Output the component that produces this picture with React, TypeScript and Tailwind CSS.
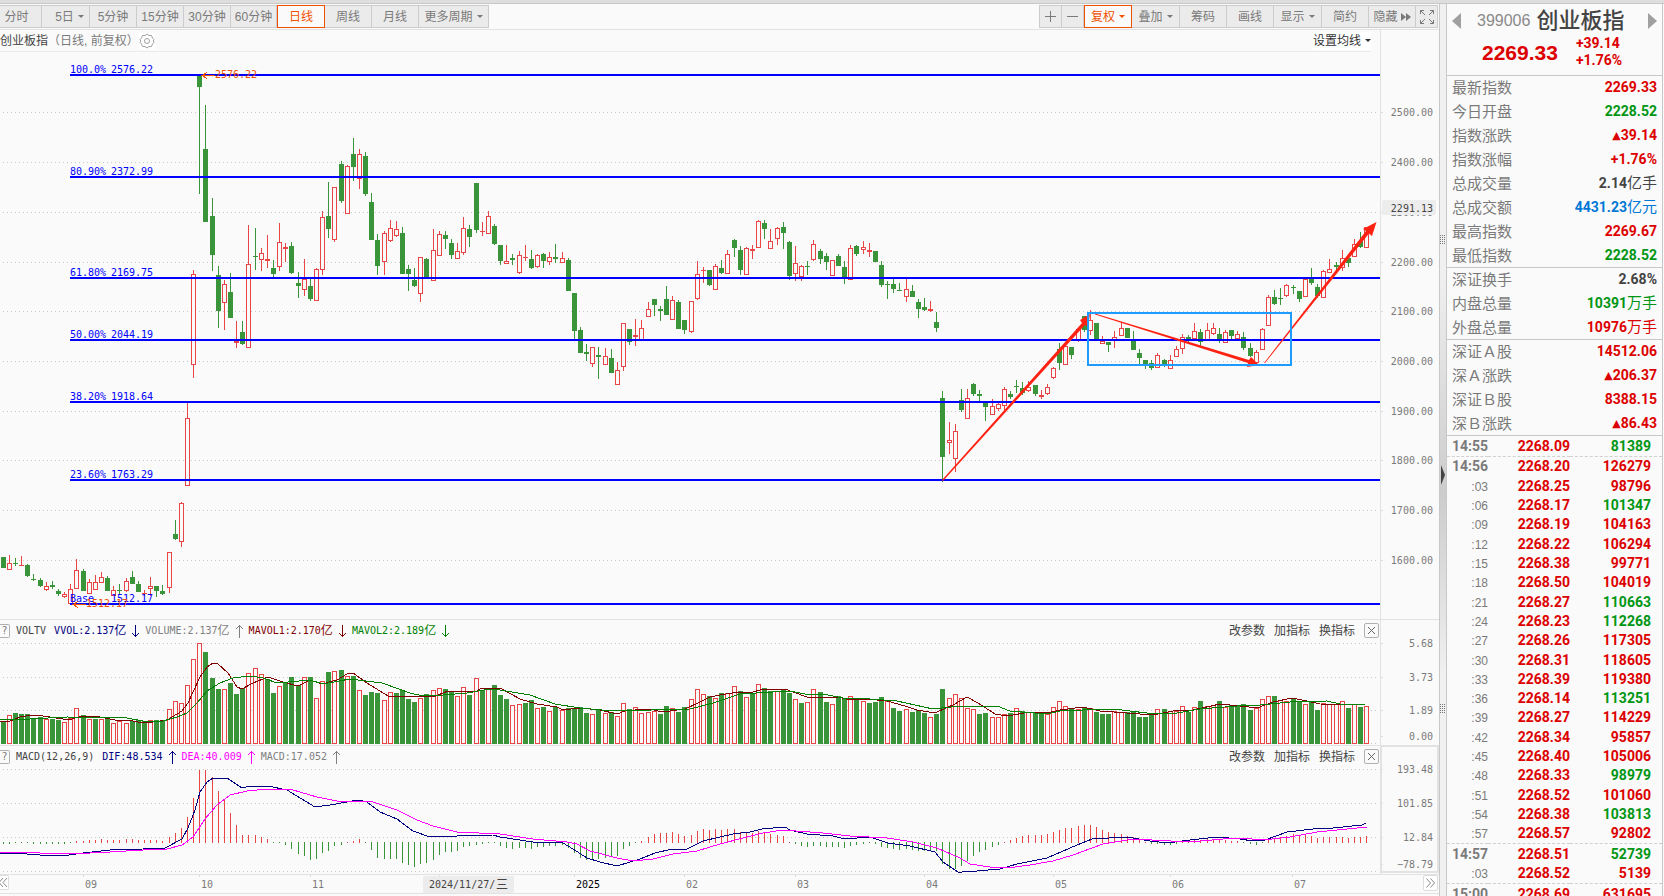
import type { ReactNode } from "react";

const RED = "#e84646";
const GREEN = "#3a943a";
const MONO = '"DejaVu Sans Mono", "Liberation Mono", monospace';

// direction, high, body top, body bottom, low
const CANDLES = `
g 557 557 568 568,r 555 563 570 570,g 558 563 564 566,r 556 565 566 566,g 564 565 576 577,g 574 579 580 581,g 578 580 586 587
r 582 586 590 591,g 581 585 587 589,g 589 591 594 596,r 592 594 597 598,r 584 589 604 604,r 559 570 589 589,g 569 571 591 591
r 579 582 594 594,r 575 582 590 590,r 572 577 583 583,g 576 578 591 591,r 586 590 596 596,g 584 590 591 594,r 578 581 591 592
g 571 577 584 584,g 581 584 592 592,r 590 593 594 596,r 577 586 589 596,g 586 586 591 597,g 585 591 594 595,r 552 552 588 593
g 520 534 539 540,r 502 503 542 547,r 403 418 486 486,r 270 274 365 378,g 75 75 87 194,g 105 149 222 222,g 198 216 255 271
g 266 275 311 328,r 280 284 303 330,g 273 292 318 318,r 321 341 343 348,g 321 332 344 345,r 225 264 348 348,g 228 256 257 270
r 248 253 260 271,r 235 259 261 268,g 260 268 274 277,r 223 242 267 271,r 243 247 249 262,g 242 246 273 274,g 272 283 286 298
r 259 279 290 296,g 279 286 299 301,r 268 269 301 301,r 211 217 270 275,g 182 216 229 238,r 187 187 240 242,g 161 164 201 203
r 165 166 214 214,g 138 154 167 181,r 149 154 179 189,g 152 156 194 196,g 193 202 240 240,g 234 240 266 275,r 231 233 262 275
r 220 228 241 242,r 221 229 236 237,g 227 233 274 274,g 265 269 274 291,g 268 280 286 287,r 257 257 294 302,g 258 259 277 277
r 229 250 281 281,r 231 234 256 256,g 231 235 239 249,g 239 243 255 259,r 243 251 259 259,r 217 228 253 255,g 225 229 237 247
g 183 183 230 233,r 222 231 232 236,r 211 216 234 234,g 224 226 244 245,g 245 245 261 265,r 245 261 264 264,g 254 258 260 265
r 251 255 273 274,r 245 257 258 261,g 250 259 268 269,r 254 255 267 268,g 253 254 261 268,r 252 257 262 265,g 244 257 259 263
r 252 258 263 263,g 258 260 291 291,g 293 293 331 340,g 327 330 353 353,g 344 352 354 361,r 347 347 364 367,g 347 355 357 379
r 348 356 365 365,g 349 358 373 373,r 362 370 385 385,r 323 323 367 371,g 329 329 342 345,r 319 335 337 346,r 320 328 340 340
r 302 309 317 317,g 299 299 305 316,g 306 309 311 321,g 286 299 315 315,r 296 300 320 320,g 300 302 329 329,g 320 320 330 334
r 301 301 332 333,r 261 274 299 300,r 267 270 271 283,g 270 270 285 286,r 264 266 290 290,g 260 268 273 274,r 250 254 274 274
g 239 240 248 257,g 246 250 270 275,r 247 248 275 275,r 245 249 251 259,r 220 221 248 248,g 220 223 229 239,r 229 241 249 249
r 227 228 239 245,g 222 227 233 249,g 241 242 276 280,r 246 263 274 281,r 265 266 277 281,g 261 266 267 275,r 240 244 260 261
g 249 251 259 264,g 253 256 262 270,r 260 260 276 276,g 254 256 266 266,g 261 267 278 284,r 245 248 280 280,g 245 246 254 256
r 241 247 250 254,r 243 250 252 257,g 251 251 262 262,g 261 265 285 287,g 281 284 285 299,g 278 284 289 293,g 283 290 291 291
r 278 289 297 302,g 285 291 297 297,g 299 302 309 318,g 298 307 310 311,r 301 309 311 312,g 312 322 328 332,g 391 398 457 482
r 422 440 443 454,r 424 431 459 472,g 389 400 410 412,r 389 398 419 419,g 383 384 394 396,g 390 394 396 402,g 402 403 407 421
r 399 406 415 415,r 401 404 409 411,r 387 389 406 410,g 391 394 397 399,g 380 386 387 393,g 382 388 393 395,r 381 387 391 392
g 385 385 394 396,r 390 395 397 399,r 384 387 394 395,r 367 368 378 379,g 343 349 363 370,r 344 346 365 365,g 347 347 355 359
r 328 329 340 342,g 316 316 330 332,r 310 320 331 335,g 323 323 339 339,r 336 341 344 344,g 342 342 345 352,r 331 337 340 348
r 322 328 336 336,g 328 328 338 338,g 331 339 350 350,g 349 353 358 365,g 360 360 364 369,g 360 363 368 370,r 353 355 368 368
g 359 360 365 367,r 355 360 369 369,r 346 349 357 357,r 334 337 349 354,g 335 337 340 343,r 323 331 339 339,g 329 332 342 346
r 323 330 340 340,r 323 328 334 335,g 328 334 340 343,r 330 332 343 343,g 330 330 336 340,r 331 334 339 339,g 332 337 348 350
g 343 348 356 357,r 350 352 363 363,r 328 329 350 350,r 295 297 326 326,g 290 297 304 305,g 288 298 299 305,r 284 285 296 297
g 285 287 288 294,g 291 291 299 302,r 278 279 297 297,g 268 278 283 285,g 284 287 296 298,r 270 271 298 298,r 259 269 273 273
g 262 265 267 272,r 250 258 268 271,g 256 258 263 267,r 239 244 257 257,g 232 241 247 248,r 227 227 248 248
`
  .trim()
  .split(/[,\n]/)
  .map((row) => {
    const [dir, ...rest] = row.split(" ");
    const [high, top, bottom, low] = rest.map(Number);
    return { up: dir === "r", high, top, bottom, low };
  });

const VOLUMES = `
g722 r715 g713 g714 g714 g718 g717 r719 g719 g720 r722 r718 r708 g715 r719 g719 r719 g718 r723 r721
r723 g721 g720 g721 r720 g720 g721 r709 r701 r703 r685 r659 r643 g652 g678 g689 r689 g683 g694 g688
r673 r668 r674 g679 g693 r686 g682 g677 g685 r677 g677 r698 r681 g672 r671 g670 r676 g676 r690 g695
g692 g693 r700 r692 g693 g690 g699 g702 r698 g694 r690 r688 g689 g692 r696 r687 g695 r678 g690 r689
g685 g695 g699 r705 r704 g703 g700 r708 g707 r711 g707 r710 g708 g709 g707 g713 r714 g709 r713 g712
r716 r703 g709 r707 r713 r712 r711 g714 g706 r708 g712 g707 r699 r689 r694 g696 r698 g693 r693 r686
g691 r697 g693 r684 g688 g691 r691 g690 g693 r699 g703 r702 r689 g692 g702 r704 g696 g699 r696 g699
r701 g703 g702 g697 r701 g708 g711 r709 g712 g710 g713 r717 g714 g689 r698 r694 r698 r708 r709 g714
g713 r717 r717 r714 g713 r708 g711 r712 g713 g714 r714 r707 r701 r706 g708 r709 g708 r708 g712 g714
g714 r711 r712 g712 g711 g717 g717 g715 r709 g709 r711 r711 r706 g712 r707 g701 r706 r705 g701 r707
g705 g706 g704 g710 r708 r699 r696 g696 r700 r701 g699 g702 r704 g702 g710 r703 r704 r704 r701 g708
r704 g707 r706
`
  .trim()
  .split(/\s+/)
  .map((v) => ({ up: v[0] === "r", top: Number(v.slice(1)) }));

const MACD = `
-2 -2 -1 0 -1 -2 -2 -2 -2 -2 -2 -1 2 2 3 3 4 3 3 3 4 4 3 3 3 3 2 6 10 15 26 45 73 73 66 52 43 30 18 8 8 8 6 4 0
-1 -3 -7 -12 -14 -18 -17 -11 -9 -4 -3 1 2 4 0 -8 -16 -17 -17 -17 -21 -23 -25 -22 -21 -18 -13 -10 -10 -9 -5 -4 -3
-2 0 -1 -4 -6 -7 -6 -6 -7 -5 -5 -4 -4 -3 -6 -11 -16 -18 -17 -17 -16 -15 -14 -7 -4 -1 2 6 9 10 10 11 9 7 8 12 14
13 14 13 14 14 11 10 10 12 11 9 8 7 1 -2 -4 -5 -4 -4 -5 -5 -5 -6 -4 -3 -2 -1 -2 -5 -6 -7 -8 -7 -8 -9 -9 -9 -9 -22
-27 -27 -24 -19 -14 -10 -8 -5 -3 1 3 5 7 8 8 8 9 11 13 15 15 17 18 18 16 13 11 10 9 7 6 4 1 -2 -2 -3 -3 -2 2 2 3 3
4 4 4 3 2 2 0 -2 -3 -1 3 4 6 7 9 7 8 7 5 6 6 6 6 5 6 6 7
`
  .trim()
  .split(/\s+/)
  .map(Number);

const MAVOL1 =
  "0,721 10,721 20,717 32,715 43,716 63,719 72,719 82,716 100,717 115,720 133,721 143,723 153,722 167,720 182,711 188,703 193,692 200,677 207,667 213,663 218,664 228,673 237,687 242,689 253,683 268,677 283,682 298,686 310,680 322,684 337,680 347,674 353,673 367,683 388,696 417,696 433,697 448,691 475,692 480,689 500,688 520,699 537,704 557,707 563,710 580,708 600,710 617,714 625,711 635,710 650,709 662,712 685,709 700,702 710,697 720,695 738,692 753,692 760,690 785,689 793,692 807,697 830,698 838,697 850,700 867,699 887,701 905,706 917,710 935,713 948,707 953,705 967,697 978,703 995,714 1007,716 1030,712 1047,713 1060,710 1083,707 1100,711 1127,713 1153,715 1173,711 1193,710 1220,704 1240,706 1257,708 1273,702 1292,698 1307,701 1320,704 1365,705";
const MAVOL2 =
  "0,719 30,719 67,717 127,718 143,721 163,721 177,717 187,713 197,703 207,691 220,683 233,678 250,676 263,678 277,683 310,680 323,684 350,679 382,683 410,693 423,696 443,695 467,693 490,689 500,690 530,695 555,704 580,708 613,711 690,709 713,703 740,694 790,691 810,695 823,694 843,698 870,699 897,701 933,709 960,706 997,706 1010,711 1047,714 1060,711 1083,710 1113,709 1147,713 1177,713 1200,709 1237,706 1260,705 1290,702 1327,701 1340,704 1365,705";
const DIF =
  "0,853 27,854 40,855 62,856 83,853 110,850 143,849 165,848 182,839 188,828 195,810 200,792 207,782 213,778 227,778 242,788 250,786 268,786 287,790 315,807 330,805 358,800 367,802 380,812 397,819 413,831 427,836 457,836 493,835 500,837 533,842 563,843 573,849 587,858 600,862 617,866 640,859 655,853 672,849 687,849 703,841 733,834 750,832 762,829 785,827 790,830 807,834 833,836 845,839 870,837 888,843 910,846 935,852 943,862 958,872 962,872 977,871 1000,869 1017,864 1047,858 1077,845 1092,839 1127,837 1150,841 1167,843 1190,840 1217,837 1240,839 1253,841 1265,840 1287,832 1313,829 1333,828 1362,825 1366,823";
const DEA =
  "0,852 40,853 70,854 110,852 143,850 167,849 182,845 193,837 205,819 217,805 230,795 247,791 267,789 293,790 317,797 337,801 370,801 397,810 417,820 433,826 457,832 500,834 533,839 567,842 577,844 590,851 617,858 633,861 653,859 673,854 697,851 720,844 743,838 763,833 783,830 823,833 850,836 887,838 913,842 937,848 960,858 970,864 990,867 1007,868 1030,865 1053,861 1073,855 1103,844 1133,839 1190,842 1223,839 1240,838 1263,840 1290,837 1317,832 1367,827";

const FIBS = [
  { y: 75, pct: "100.0%", price: "2576.22" },
  { y: 177, pct: "80.90%", price: "2372.99" },
  { y: 278, pct: "61.80%", price: "2169.75" },
  { y: 340, pct: "50.00%", price: "2044.19" },
  { y: 402, pct: "38.20%", price: "1918.64" },
  { y: 480, pct: "23.60%", price: "1763.29" },
  { y: 604, pct: "Base", price: "1512.17" },
];

const PRICE_TICKS: [number, string][] = [
  [112, "2500.00"],
  [162, "2400.00"],
  [212, "2300.00"],
  [262, "2200.00"],
  [311, "2100.00"],
  [361, "2000.00"],
  [411, "1900.00"],
  [460, "1800.00"],
  [510, "1700.00"],
  [560, "1600.00"],
];

const MONTHS = [
  { x: 83, label: "09" },
  { x: 199, label: "10" },
  { x: 310, label: "11" },
  { x: 439, label: "" },
  { x: 574, label: "2025" },
  { x: 684, label: "02" },
  { x: 795, label: "03" },
  { x: 924, label: "04" },
  { x: 1053, label: "05" },
  { x: 1170, label: "06" },
  { x: 1292, label: "07" },
];

const QUOTES = [
  [
    ["最新指数", "2269.33", "red"],
    ["今日开盘", "2228.52", "green"],
    ["指数涨跌", "▲39.14", "red"],
    ["指数涨幅", "+1.76%", "red"],
    ["总成交量", "2.14亿手", "dark"],
    ["总成交额", "4431.23亿元", "blue"],
    ["最高指数", "2269.67", "red"],
    ["最低指数", "2228.52", "green"],
  ],
  [
    ["深证换手", "2.68%", "dark"],
    ["内盘总量", "10391万手", "green"],
    ["外盘总量", "10976万手", "red"],
  ],
  [
    ["深证Ａ股", "14512.06", "red"],
    ["深Ａ涨跌", "▲206.37", "red"],
    ["深证Ｂ股", "8388.15", "red"],
    ["深Ｂ涨跌", "▲86.43", "red"],
  ],
];

const TRADES: [string, string, string, boolean][] = [
  ["14:55", "2268.09", "81389", false],
  ["14:56", "2268.20", "126279", true],
  [":03", "2268.25", "98796", true],
  [":06", "2268.17", "101347", false],
  [":09", "2268.19", "104163", true],
  [":12", "2268.22", "106294", true],
  [":15", "2268.38", "99771", true],
  [":18", "2268.50", "104019", true],
  [":21", "2268.27", "110663", false],
  [":24", "2268.23", "112268", false],
  [":27", "2268.26", "117305", true],
  [":30", "2268.31", "118605", true],
  [":33", "2268.39", "119380", true],
  [":36", "2268.14", "113251", false],
  [":39", "2268.27", "114229", true],
  [":42", "2268.34", "95857", true],
  [":45", "2268.40", "105006", true],
  [":48", "2268.33", "98979", false],
  [":51", "2268.52", "101060", true],
  [":54", "2268.38", "103813", false],
  [":57", "2268.57", "92802", true],
  ["14:57", "2268.51", "52739", false],
  [":03", "2268.52", "5139", true],
  ["15:00", "2268.69", "631695", true],
];

const COLORS: Record<string, string> = {
  red: "text-[#dc0000]",
  green: "text-[#009614]",
  dark: "text-[#444444]",
  blue: "text-[#0078d7]",
};

const barX = (i: number) => Math.floor(3.2 + i * 6.14195);

function Bar({ x, top, bottom, up }: { x: number; top: number; bottom: number; up: boolean }) {
  const height = bottom - top;
  if (up && height > 2) {
    return <rect x={x - 1.5} y={top + 0.5} width={4} height={height - 1} fill="#fafafa" stroke={RED} />;
  }
  return <rect x={x - 2} y={top} width={5} height={height} fill={up ? RED : GREEN} />;
}

function GridLines({ ys }: { ys: number[] }) {
  return (
    <>
      {ys.map((y) => (
        <line key={y} x1={3} x2={1379} y1={y + 0.5} y2={y + 0.5} stroke="#c8c8c8" strokeDasharray="1 3" />
      ))}
    </>
  );
}

function PriceChart() {
  return (
    <svg viewBox="0 52 1380 567" className="block w-full" shapeRendering="crispEdges">
      <GridLines ys={PRICE_TICKS.map(([y]) => y)} />
      {CANDLES.map((c, i) => {
        const x = barX(i);
        return (
          <g key={i}>
            <rect x={x} y={c.high} width={1} height={c.low - c.high} fill={c.up ? RED : GREEN} />
            <Bar x={x} top={c.top} bottom={c.bottom} up={c.up} />
          </g>
        );
      })}
      {FIBS.map((f) => (
        <g key={f.y}>
          <rect x={70} y={f.y - 1} width={1310} height={2} fill="#0000ff" />
          <g fill="#0000ff" fontSize={10} fontFamily={MONO}>
            <text x={70} y={f.y - 2}>{f.pct}</text>
            <text x={111} y={f.y - 2}>{f.price}</text>
          </g>
        </g>
      ))}
      <g stroke="#f05000" fill="none">
        <path d="M201 75.5H215M207 72.5L202 75.5L207 78.5" />
        <path d="M72 604.5H86M78 601.5L73 604.5L78 607.5" />
      </g>
      <g fill="#f05000" fontSize={10} fontFamily={MONO}>
        <text x={215} y={78}>2576.22</text>
        <text x={86} y={607}>1512.17</text>
      </g>
      {/* hand-drawn trend marks */}
      <g fill="#ff2213" shapeRendering="auto">
        <path d="M942 480L1082 323L1080 320L1090 314L1088 327L1085 325L943 481Z" />
        <path d="M1095 313.500L1249 360L1251 357L1259 365L1247 367L1248 363L1095 314.500Z" />
        <path d="M1264 363L1366 231L1363 229L1376.500 222L1372 236L1369 233.500L1265 363Z" />
      </g>
      <rect x={1088} y={313} width={203} height={52} fill="none" stroke="#1e9bff" strokeWidth={2} />
    </svg>
  );
}

function VolumeChart() {
  return (
    <svg viewBox="0 641 1380 104" className="block w-full" shapeRendering="crispEdges">
      <GridLines ys={[643, 677, 710, 743]} />
      {VOLUMES.map((v, i) => (
        <Bar key={i} x={barX(i)} top={v.top} bottom={744} up={v.up} />
      ))}
      <polyline points={MAVOL1} fill="none" stroke="#800000" />
      <polyline points={MAVOL2} fill="none" stroke="#008000" />
    </svg>
  );
}

function MacdChart() {
  return (
    <svg viewBox="0 767 1380 107" className="block w-full" shapeRendering="crispEdges">
      <GridLines ys={[769, 803, 837, 871]} />
      {MACD.map((v, i) => (
        <rect
          key={i}
          x={barX(i)}
          y={v > 0 ? 843 - v : 842}
          width={1}
          height={Math.max(Math.abs(v), 1)}
          fill={v > 0 ? RED : GREEN}
        />
      ))}
      <polyline points={DIF} fill="none" stroke="#000080" />
      <polyline points={DEA} fill="none" stroke="#ff00ff" />
    </svg>
  );
}

function Axis({
  top,
  height,
  labels,
  children,
}: {
  top: number;
  height: number;
  labels: [number, string][];
  children?: ReactNode;
}) {
  return (
    <svg viewBox={`1380 ${top} 59 ${height}`} className="block w-[59px] shrink-0 self-start" shapeRendering="crispEdges">
      <rect x={1380} y={top} width={1} height={height} fill="#e2e2e2" />
      {labels.map(([y, label]) => (
        <g key={label}>
          <rect x={1381} y={y} width={2} height={1} fill="#dcdcdc" />
          <text x={1433} y={y + 4} textAnchor="end" fill="#7a7a7a" fontSize={10} fontFamily={MONO}>
            {label}
          </text>
        </g>
      ))}
      {children}
    </svg>
  );
}

function Arrow({ up }: { up?: boolean }) {
  return (
    <svg viewBox="0 0 19 14" className="h-[14px] w-[19px]" fill="none" stroke="currentColor" shapeRendering="crispEdges">
      {up ? <path d="M9.500 14V1M6 5L9.500 1.500L13 5" /> : <path d="M9.500 1V13M6 9L9.500 12.500L13 9" />}
    </svg>
  );
}

function IndicatorHeader({ name, children }: { name: string; children: ReactNode }) {
  return (
    <div className="flex h-[21px] items-center justify-between">
      <div className="flex items-center font-['DejaVu_Sans_Mono','Noto_Sans_CJK_SC',monospace] text-[10px] whitespace-nowrap">
        <button
          aria-label="指标说明"
          className="mr-[6px] h-[14px] w-[10px] rounded-r-xs border border-l-0 border-[#b0b0b0] text-[10px] leading-none text-[#7a7a7a]"
        >
          ?
        </button>
        <span className="mr-2 text-[#444444]">{name}</span>
        {children}
      </div>
      <div className="flex items-center gap-[9px] pr-[1px] text-[12px] text-[#444444]">
        <button>改参数</button>
        <button>加指标</button>
        <button>换指标</button>
        <button aria-label="关闭" className="h-[15px] w-[15px] rounded-xs border border-[#b0b0b0] p-[3px]">
          <svg viewBox="0 0 7 7" className="block" stroke="#666" shapeRendering="crispEdges">
            <path d="M0 0L7 7M7 0L0 7" />
          </svg>
        </button>
      </div>
    </div>
  );
}

function Stat({ text, unit, className, up }: { text: string; unit?: string; className: string; up?: boolean }) {
  return (
    <span className={`flex items-center ${className}`}>
      {text}
      {unit && <span className="text-[12px] leading-none">{unit}</span>}
      <Arrow up={up} />
    </span>
  );
}

function Caret() {
  return <span className="ml-1 border-x-[3px] border-t-[3px] border-x-transparent border-t-current" />;
}

function ToolButton({
  width,
  active,
  caret,
  label,
  children,
}: {
  width: string;
  active?: boolean;
  caret?: boolean;
  label?: string;
  children: ReactNode;
}) {
  return (
    <button
      aria-label={label}
      className={`flex h-[23px] shrink-0 items-center justify-center border whitespace-nowrap ${width} ${
        active ? "border-[#f05000] bg-[#fafafa] text-[#f05000]" : "border-l-0 border-[#cccccc] bg-[#ebebeb] text-[#7a7a7a]"
      }`}
    >
      {children}
      {caret && <Caret />}
    </button>
  );
}

function Toolbar() {
  return (
    <div className="flex h-[26px] items-center justify-between border-b border-[#e2e2e2] pr-px text-[12px]">
      <div className="flex">
        <ToolButton width="w-[42px] pr-2">分时</ToolButton>
        <ToolButton width="w-[48px] pl-2" caret>5日</ToolButton>
        <ToolButton width="w-[47px]">5分钟</ToolButton>
        <ToolButton width="w-[47px]">15分钟</ToolButton>
        <ToolButton width="w-[47px]">30分钟</ToolButton>
        <ToolButton width="w-[46px]">60分钟</ToolButton>
        <ToolButton width="w-[48px]" active>日线</ToolButton>
        <ToolButton width="w-[47px]">周线</ToolButton>
        <ToolButton width="w-[47px]">月线</ToolButton>
        <ToolButton width="w-[70px]" caret>更多周期</ToolButton>
      </div>
      <div className="flex border-l border-[#cccccc]">
        <ToolButton width="w-[22px]" label="放大">
          <svg viewBox="0 0 11 11" className="w-[11px]" stroke="currentColor" shapeRendering="crispEdges">
            <path d="M0 5.500H11M5.500 0V11" />
          </svg>
        </ToolButton>
        <ToolButton width="w-[22px]" label="缩小">
          <svg viewBox="0 0 11 11" className="w-[11px]" stroke="currentColor" shapeRendering="crispEdges">
            <path d="M0 5.500H11" />
          </svg>
        </ToolButton>
        <ToolButton width="w-[48px]" active caret>复权</ToolButton>
        <ToolButton width="w-[48px]" caret>叠加</ToolButton>
        <ToolButton width="w-[47px]">筹码</ToolButton>
        <ToolButton width="w-[47px]">画线</ToolButton>
        <ToolButton width="w-[48px]" caret>显示</ToolButton>
        <ToolButton width="w-[47px]">简约</ToolButton>
        <ToolButton width="w-[47px]">
          隐藏
          <svg viewBox="0 0 10 8" className="ml-[3px] w-[10px]" fill="currentColor">
            <path d="M0 0L5 4L0 8ZM5 0L10 4L5 8Z" />
          </svg>
        </ToolButton>
        <ToolButton width="w-[22px]" label="全屏">
          <svg viewBox="0 0 14 14" className="w-[14px]" fill="none" stroke="currentColor">
            <path d="M.5 4V.5H4M.5.5L5 5M10 .5H13.500V4M13.500.5L9 5M.5 10V13.500H4M.5 13.500L5 9M10 13.500H13.500V10M13.500 13.500L9 9" />
          </svg>
        </ToolButton>
      </div>
    </div>
  );
}

function DateAxis() {
  return (
    <div className="flex border-y border-[#e2e2e2]">
      <button aria-label="向左" className="flex h-[15px] w-[9px] shrink-0 items-center rounded-r-xs border border-l-0 border-[#dcdcdc] bg-white">
        <svg viewBox="0 0 8 9" className="w-2" fill="none" stroke="#888">
          <path d="M3 0L-1 4.500L3 9M7 0L3 4.500L7 9" />
        </svg>
      </button>
      <svg viewBox="9 875 1414 18" className="block min-w-0 flex-1" shapeRendering="crispEdges">
        {MONTHS.map((m) => (
          <g key={m.x}>
            <rect x={m.x} y={874} width={1} height={3} fill="#dcdcdc" />
            <text x={m.x + 2} y={888} fill={m.label === "2025" ? "#000" : "#7a7a7a"} fontSize={10} fontFamily={MONO}>
              {m.label}
            </text>
          </g>
        ))}
        <rect x={423} y={876} width={91} height={17} rx={2} fill="#ececec" />
        <text x={429} y={888} fill="#444" fontSize={10} fontFamily={MONO}>
          2024/11/27/
        </text>
        <text x={496} y={889} fill="#444" fontSize={12} fontFamily='"Noto Sans CJK SC", sans-serif'>
          三
        </text>
      </svg>
      <button aria-label="向右" className="mr-px flex h-[16px] w-[15px] shrink-0 items-center justify-center rounded-xs border border-[#dcdcdc] bg-white">
        <svg viewBox="0 0 9 10" className="w-[9px]" fill="none" stroke="#888">
          <path d="M.5.5L4.500 5L.5 9.500M4.500.5L8.500 5L4.500 9.500" />
        </svg>
      </button>
    </div>
  );
}

function Grip() {
  return (
    <svg viewBox="0 0 6 9" className="block h-[9px] w-[6px]" stroke="#777" strokeDasharray="1 1" shapeRendering="crispEdges">
      <path d="M.5 0V9M2.500 0V9M4.500 0V9" />
    </svg>
  );
}

function QuoteValue({ value, tone }: { value: string; tone: string }) {
  const [, mark, num, unit] = value.match(/^(▲?)([-+\d.%]+)(.*)$/)!;
  return (
    <dd className={`flex items-center font-['Roboto','Noto_Sans_CJK_SC',sans-serif] text-[14px] font-bold ${COLORS[tone]}`}>
      {mark && <span className="font-['DejaVu_Sans',sans-serif] text-[11px] leading-none font-normal">{mark}</span>}
      {num}
      {unit && <span className="text-[15px] leading-none font-normal">{unit}</span>}
    </dd>
  );
}

function QuotePanel() {
  return (
    <aside className="mr-px w-[216px] shrink-0 overflow-hidden border-r border-[#c8c8c8]">
      <div className="flex h-[72px] flex-col border-b border-[#c8c8c8] pt-[3px]">
        <div className="flex h-[28px] items-center px-[5px]">
          <button aria-label="上一只" className="border-y-8 border-r-[9px] border-y-transparent border-r-[#a0a0a0]" />
          <h1 className="flex flex-1 items-center gap-[6px] pl-[16px] whitespace-nowrap">
            <span className="text-[16px] text-[#8a8a8a]">399006</span>
            <span className="text-[22px] leading-none font-medium text-[#444444]">创业板指</span>
          </h1>
          <button aria-label="下一只" className="border-y-8 border-l-[9px] border-y-transparent border-l-[#a0a0a0]" />
        </div>
        <div className="flex items-center gap-[18px] pl-[35px] font-bold text-[#dc0000]">
          <span className="text-[21px] leading-none">2269.33</span>
          <span className="font-['Roboto',sans-serif] text-[14px] leading-[17px]">
            +39.14
            <br />
            +1.76%
          </span>
        </div>
      </div>
      {QUOTES.map((group, i) => (
        <dl key={i} className="border-b border-[#c8c8c8] pr-[5px] pl-[5px]">
          {group.map(([label, value, tone], j) => (
            <div
              key={label}
              className={`flex items-center justify-between ${j === group.length - 1 ? "h-[23px] pb-px" : "h-[24px] pb-0.5"}`}
            >
              <dt className="text-[15px] leading-none text-[#7a7a7a]">{label}</dt>
              <QuoteValue value={value} tone={tone} />
            </div>
          ))}
        </dl>
      ))}
      <table className="h-[468px] w-full table-fixed border-collapse text-right font-['Roboto',sans-serif] text-[14px] leading-none font-bold">
        <tbody>
          {TRADES.map(([time, price, volume, buy], i) => (
            <tr key={i} className={[0, 20, 22].includes(i) ? "border-b border-dashed border-[#d0d0d0]" : ""}>
              <td className="w-[41px] p-0 text-[#7a7a7a]">
                {time[0] === ":" ? (
                  <span className="font-['Liberation_Sans',sans-serif] text-[12px] font-normal">{time}</span>
                ) : (
                  time
                )}
              </td>
              <td className="w-[82px] p-0 text-[#dc0000]">{price}</td>
              <td className={`py-0 pr-[11px] pl-0 ${buy ? "text-[#dc0000]" : "text-[#009614]"}`}>{volume}</td>
            </tr>
          ))}
        </tbody>
      </table>
    </aside>
  );
}

export default function App() {
  return (
    <div className="flex h-screen flex-col overflow-hidden bg-[#fafafa] font-['Liberation_Sans','Noto_Sans_CJK_SC',sans-serif]">
      <div className="h-1 shrink-0 border-b border-[#c8c8c8] bg-[#dedede]" />
      <div className="flex min-h-0 flex-1">
        <main className="min-w-0 flex-1">
          <Toolbar />

          <section className="flex border-b border-[#e2e2e2]">
            <div className="min-w-0 flex-1">
              <div className="mr-[9px] flex h-[22px] items-center justify-between border-b border-[#ebebeb] text-[12px]">
                <h2 className="flex items-center text-[#444444]">
                  创业板指
                  <span className="text-[#7a7a7a]">（日线, 前复权）</span>
                  <button aria-label="设置" className="bg-white">
                    <svg viewBox="0 0 16 16" className="w-4" fill="none" stroke="#a0a0a0">
                      <path d="M8 1L10 2.500L12.500 2.500L13.500 5L15 6.500L14.300 8L15 9.500L13.500 11L12.500 13.500L10 13.500L8 15L6 13.500L3.500 13.500L2.500 11L1 9.500L1.700 8L1 6.500L2.500 5L3.500 2.500L6 2.500Z" />
                      <circle cx={8} cy={8} r={2.5} />
                    </svg>
                  </button>
                </h2>
                <button className="flex items-center bg-white text-[#333333]">
                  设置均线
                  <Caret />
                </button>
              </div>
              <PriceChart />
            </div>
            <Axis top={30} height={589} labels={PRICE_TICKS}>
              <rect x={1382} y={200} width={54} height={15} rx={2} fill="#ededed" />
              <text x={1433} y={212} textAnchor="end" fill="#444" fontSize={10} fontFamily={MONO}>
                2291.13
              </text>
            </Axis>
          </section>

          <section className="flex border-b border-[#e2e2e2]">
            <div className="min-w-0 flex-1">
              <IndicatorHeader name="VOLTV">
                <Stat text="VVOL:2.137" unit="亿" className="text-[#000080]" />
                <Stat text="VOLUME:2.137" unit="亿" className="text-[#808080]" up />
                <Stat text="MAVOL1:2.170" unit="亿" className="text-[#800000]" />
                <Stat text="MAVOL2:2.189" unit="亿" className="text-[#008000]" />
              </IndicatorHeader>
              <VolumeChart />
            </div>
            <Axis
              top={620}
              height={125}
              labels={[
                [643, "5.68"],
                [677, "3.73"],
                [710, "1.89"],
                [736, "0.00"],
              ]}
            />
          </section>

          <section className="flex">
            <div className="min-w-0 flex-1">
              <IndicatorHeader name="MACD(12,26,9)">
                <Stat text="DIF:48.534" className="text-[#000080]" up />
                <Stat text="DEA:40.009" className="text-[#ff00ff]" up />
                <Stat text="MACD:17.052" className="text-[#808080]" up />
              </IndicatorHeader>
              <MacdChart />
            </div>
            <Axis
              top={746}
              height={128}
              labels={[
                [769, "193.48"],
                [803, "101.85"],
                [837, "12.84"],
                [864, "−78.79"],
              ]}
            >
              <rect x={1381} y={746} width={57} height={126} fill="none" stroke="#e2e2e2" strokeWidth={2} />
            </Axis>
          </section>

          <DateAxis />
        </main>

        <div className="flex w-2 shrink-0 flex-col border-x border-[#c8c8c8] bg-linear-to-b from-[#f0f0f0] from-30% via-[#cccccc] via-55% to-[#f0f0f0] to-75% pt-[231px]">
          <Grip />
          <button
            aria-label="收起"
            className="mt-[221px] mb-[219px] ml-px w-0 border-y-[10px] border-l-4 border-y-transparent border-l-[#444444]"
          />
          <Grip />
        </div>

        <QuotePanel />
      </div>
    </div>
  );
}
